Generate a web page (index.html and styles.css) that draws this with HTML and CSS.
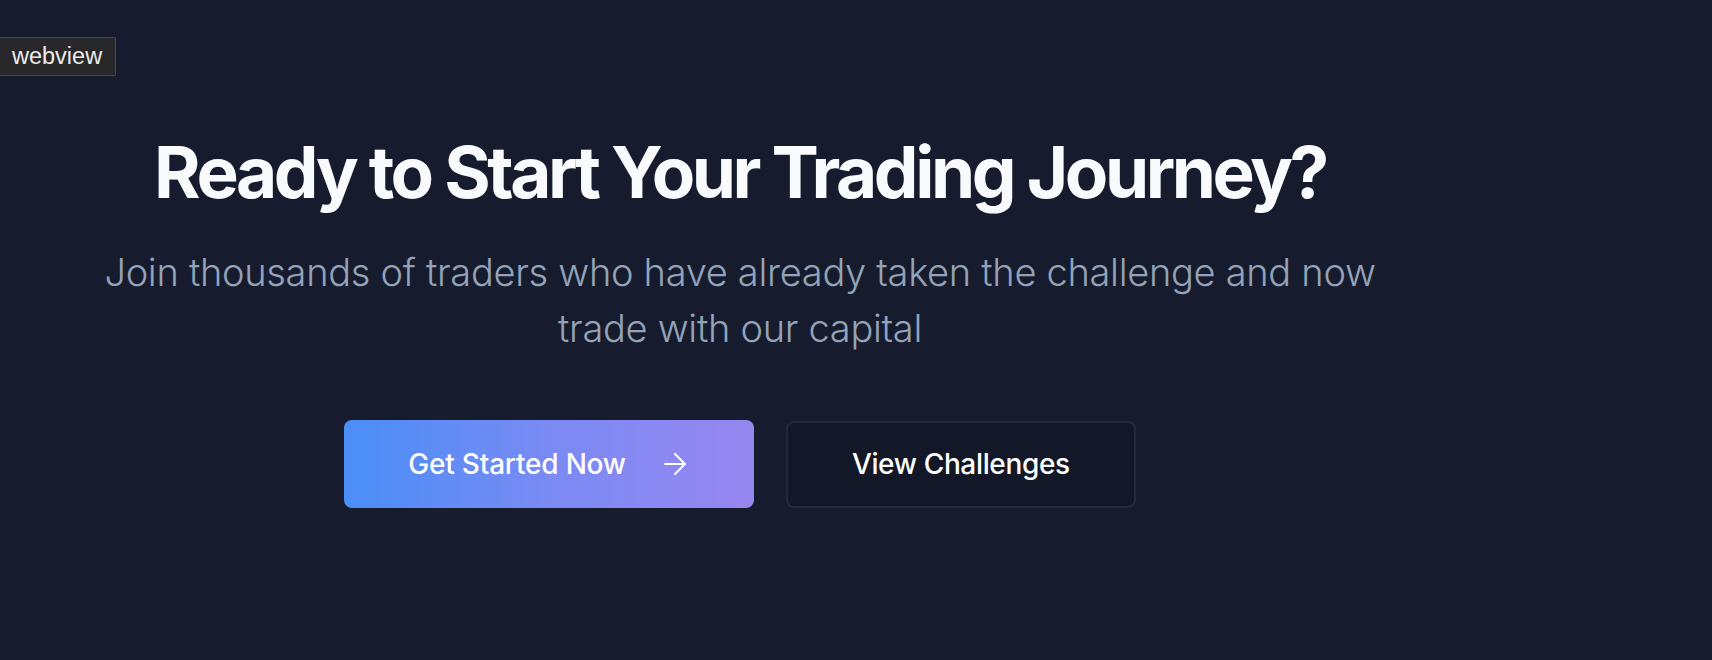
FILE: index.html
```html
<!DOCTYPE html>
<html lang="en">
<head>
<meta charset="utf-8">
<title>Ready to Start Your Trading Journey?</title>
<link rel="stylesheet" href="styles.css">
</head>
<body>
<div class="tag">webview</div>
<section class="cta">
  <div class="cta-inner">
    <h2 class="cta-title">Ready to Start Your Trading Journey?</h2>
    <p class="cta-text">Join thousands of traders who have already taken the challenge and now trade with our capital</p>
    <div class="cta-actions">
      <a class="btn btn-primary" href="#">Get Started Now
        <svg class="btn-icon" width="22" height="22" viewBox="0 0 22 22" fill="none" stroke="currentColor" stroke-width="2" stroke-linecap="round" stroke-linejoin="round"><path d="M1 11h20"/><path d="M11 1l10 10-10 10"/></svg>
      </a>
      <a class="btn btn-secondary" href="#">View Challenges</a>
    </div>
  </div>
</section>
</body>
</html>
```
FILE: styles.css
```css
html, body {
  margin: 0;
  padding: 0;
}
body {
  background: #161c2e;
  font-family: Inter, "Noto Sans", sans-serif;
  min-height: 660px;
  position: relative;
}
.tag {
  position: absolute;
  left: 0;
  top: 37px;
  height: 37px;
  padding: 0 13px 0 12px;
  background: #28282b;
  border: 1px solid #48484b;
  border-left: none;
  border-radius: 0 2px 2px 0;
  color: #ececec;
  font-family: "Liberation Sans", Arial, sans-serif;
  font-size: 23.5px;
  line-height: 37px;
}
.cta {
  width: 1480px;
  padding-top: 132px;
}
.cta-inner {
  display: flex;
  flex-direction: column;
  align-items: center;
  text-align: center;
}
.cta-title {
  margin: 0 0 32px;
  font-size: 71px;
  line-height: 80px;
  font-weight: 700;
  letter-spacing: -3.4px;
  color: #f8fafc;
}
.cta-text {
  margin: 0 0 64px;
  max-width: 1344px;
  font-size: 38px;
  line-height: 56px;
  font-weight: 300;
  letter-spacing: -0.3px;
  color: #94a3b8;
}
.cta-actions {
  display: flex;
  gap: 32px;
  align-items: center;
}
.btn {
  display: flex;
  align-items: center;
  box-sizing: border-box;
  height: 88px;
  padding: 0 64px;
  border-radius: 8px;
  font-size: 28px;
  line-height: 40px;
  font-weight: 450;
  letter-spacing: -0.2px;
  color: #ffffff;
  text-decoration: none;
}
.btn-primary {
  padding-right: 68px;
  background: linear-gradient(90deg, #4a8ef7 0%, #7a8af4 50%, #9886f0 100%);
}
.btn-icon {
  margin-left: 38px;
}
.btn-secondary {
  height: 87px;
  letter-spacing: -0.35px;
  background: #121828;
  border: 2px solid #222a3b;
}
```
